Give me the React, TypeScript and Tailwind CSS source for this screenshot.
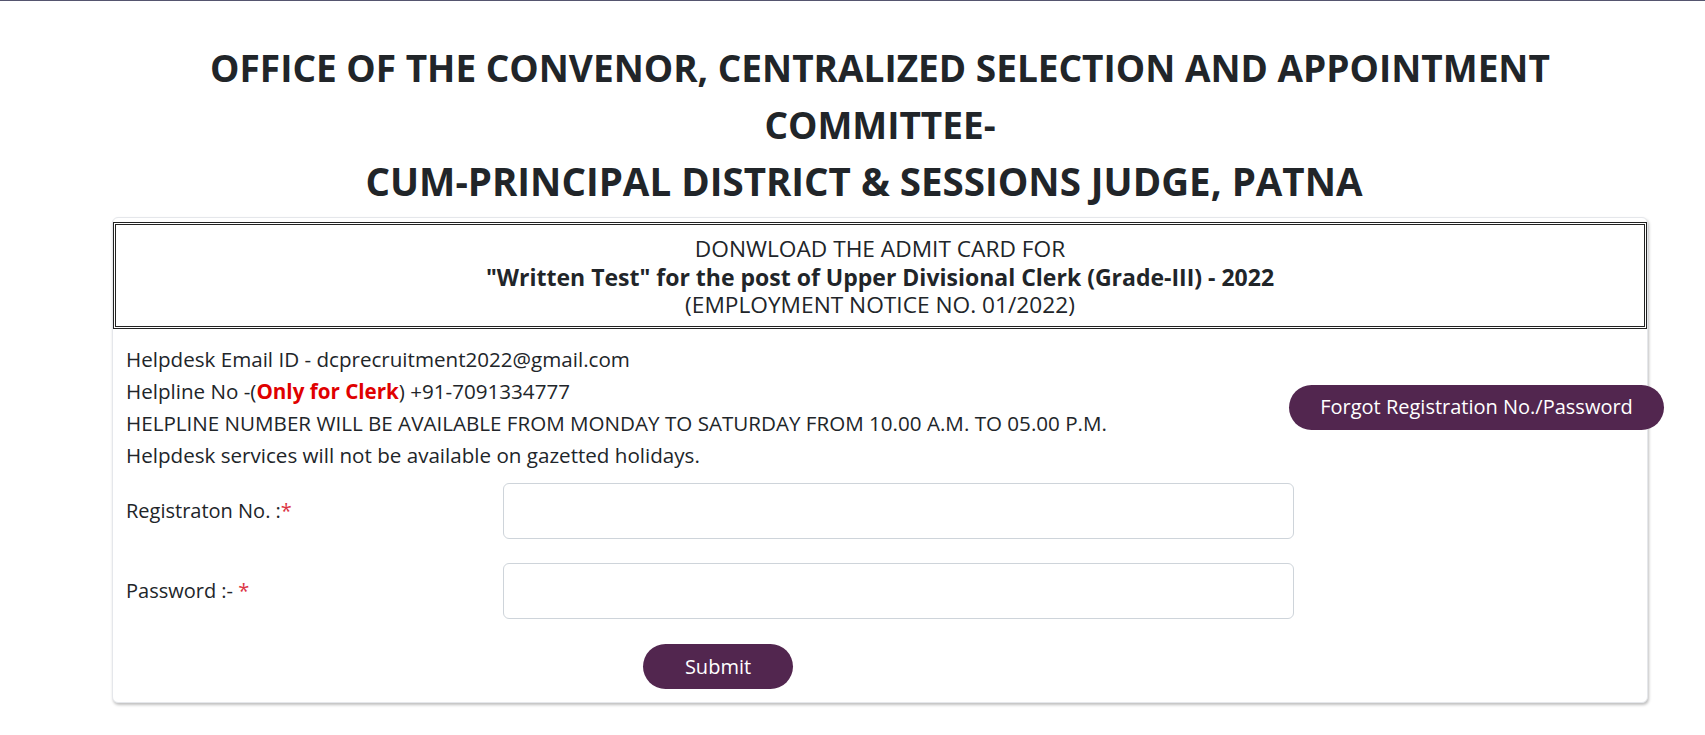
import React from 'react'

const font = { fontFamily: '"Open Sans", "Noto Sans", sans-serif' }

export default function App() {
  return (
    <div className="min-h-[735px] bg-white text-[#212529] border-t border-[#55556f]" style={font}>
      <div className="ml-[112px] w-[1536px]">
        <h2 className="pt-[38px] text-center text-[37px] leading-[57px] font-bold">
          <div>OFFICE OF THE CONVENOR, CENTRALIZED SELECTION AND APPOINTMENT</div>
          <div>COMMITTEE-</div>
          <div className="pr-[32px] text-[38.5px]">CUM-PRINCIPAL DISTRICT &amp; SESSIONS JUDGE, PATNA</div>
        </h2>

        <div className="mt-[7px] rounded-md border border-gray-200 bg-white pt-[4px] pb-[13px] shadow-[1px_2px_3px_rgba(0,0,0,0.25)]">
          {/* Title box */}
          <div className="border-[3px] border-double border-[#222] pt-[10px] pb-[7px] text-center text-[22.7px] leading-[28px]">
            <div>DONWLOAD THE ADMIT CARD FOR</div>
            <div className="text-[23px] font-bold">"Written Test" for the post of Upper Divisional Clerk (Grade-III) - 2022</div>
            <div>(EMPLOYMENT NOTICE NO. 01/2022)</div>
          </div>

          <div className="px-[13px]">
            {/* Helpdesk info */}
            <div className="mt-[14px] flex items-center justify-between">
              <div className="text-[20.6px] leading-[32px]">
                <div>Helpdesk Email ID - dcprecruitment2022@gmail.com</div>
                <div>
                  Helpline No -(<span className="font-bold text-[#e00000]">Only for Clerk</span>) +91-7091334777
                </div>
                <div>HELPLINE NUMBER WILL BE AVAILABLE FROM MONDAY TO SATURDAY FROM 10.00 A.M. TO 05.00 P.M.</div>
                <div>Helpdesk services will not be available on gazetted holidays.</div>
              </div>
              <button className="-mr-[30px] h-[45px] w-[375px] rounded-full bg-[#52264f] text-[20px] text-white">
                Forgot Registration No./Password
              </button>
            </div>

            {/* Form */}
            <div className="mt-[12px] flex flex-col gap-[24px]">
              <div className="flex items-center">
                <label className="w-[377px] text-[20px]">
                  Registraton No. :<span className="text-[#dc3545]">*</span>
                </label>
                <input className="h-[56px] w-[791px] rounded-md border border-[#ced4da] px-3 text-[20px] outline-none" />
              </div>
              <div className="flex items-center">
                <label className="w-[377px] text-[20px]">
                  Password :- <span className="text-[#dc3545]">*</span>
                </label>
                <input type="password" className="h-[56px] w-[791px] rounded-md border border-[#ced4da] px-3 text-[20px] outline-none" />
              </div>
            </div>

            <div className="mt-[25px] pl-[517px]">
              <button className="h-[45px] w-[150px] rounded-full bg-[#52264f] text-[20px] text-white">Submit</button>
            </div>
          </div>
        </div>
      </div>
    </div>
  )
}
